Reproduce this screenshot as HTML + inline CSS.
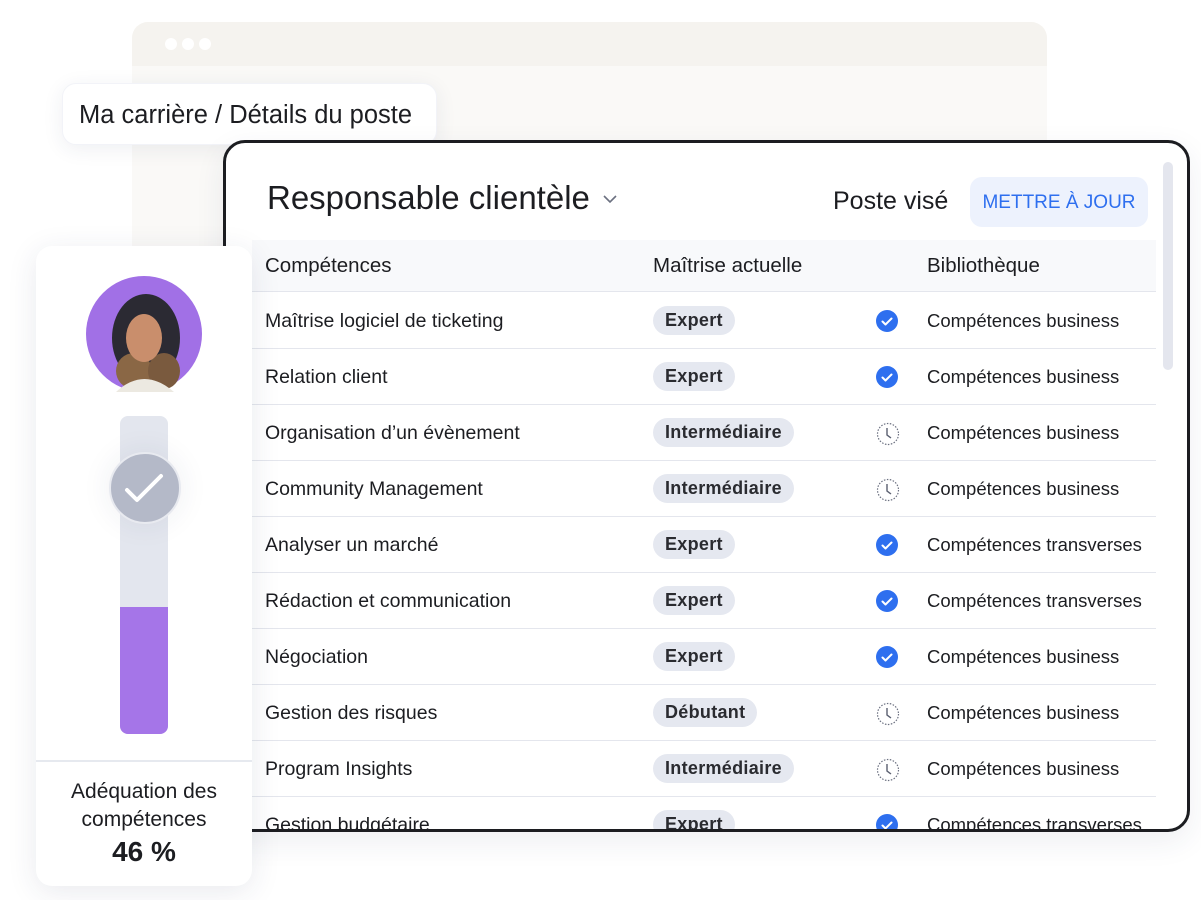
<!DOCTYPE html>
<html><head><meta charset="utf-8"><style>
*{box-sizing:border-box;margin:0;padding:0}
body{width:1201px;height:900px;background:#fff;position:relative;overflow:hidden;font-family:"Liberation Sans","Noto Sans CJK JP",sans-serif;color:#1c1d21}
.abs{position:absolute}
.browser{left:132px;top:22px;width:915px;height:260px;background:#faf9f7;border-radius:16px 16px 0 0;overflow:hidden}
.browser .hd{height:44px;background:#f5f3ef}
.dot{position:absolute;top:16px;width:12px;height:12px;border-radius:50%;background:#fff}
.crumb{left:62px;top:83px;width:375px;height:62px;background:#fff;border-radius:14px;box-shadow:0 4px 20px rgba(40,50,90,.08);font-size:25.5px;line-height:62px;padding-left:16px;border:1px solid #f2f3f8;white-space:nowrap}
.main{left:223px;top:140px;width:967px;height:692px;border:3px solid #1c1d21;border-radius:22px;background:#fff;overflow:hidden;box-shadow:0 10px 30px rgba(40,50,90,.08)}
.title{left:41px;top:36px;font-size:33px}
.poste{left:607px;top:44px;font-size:25px}
.btn{left:744px;top:34px;width:178px;height:50px;background:#edf2fd;border-radius:12px;color:#2e6fef;font-size:19px;text-align:center;line-height:52px}
.thead{left:26px;top:97px;width:904px;height:52px;background:#f8f9fb;border-bottom:1px solid #e4e6ed}
.row{left:26px;width:904px;height:56px;border-bottom:1px solid #e4e6ed;font-size:19.5px}
.cell{position:absolute;top:0;line-height:56px;white-space:nowrap}
.lib{font-size:18.5px}
.badge{position:absolute;left:401px;top:13px;height:29px;line-height:29px;padding:0 12px;background:#e5e8f0;border-radius:15px;font-weight:bold;font-size:18px;color:#2a2b30;letter-spacing:.3px}
.ic{position:absolute;left:624px;top:17px}
.scroll{left:937px;top:19px;width:10px;height:208px;background:#e4e6ee;border-radius:5px}
.card{left:36px;top:246px;width:216px;height:640px;background:#fff;border-radius:16px;box-shadow:0 6px 30px rgba(40,50,90,.10)}
</style></head><body>
<div class="abs browser"><div class="hd"></div><div class="dot" style="left:33px"></div><div class="dot" style="left:50px"></div><div class="dot" style="left:67px"></div></div>
<div class="abs crumb">Ma carrière / Détails du poste</div>
<div class="abs main">
 <div class="abs title">Responsable clientèle</div>
 <svg class="abs" style="left:376px;top:50px" width="16" height="12"><path d="M2 3l6 6 6-6" fill="none" stroke="#6b7080" stroke-width="1.6"/></svg>
 <div class="abs poste">Poste visé</div>
 <div class="abs btn">METTRE À JOUR</div>
 <div class="abs scroll"></div>
 <div class="abs thead" style="font-size:20.5px">
  <div class="cell" style="left:13px;line-height:52px">Compétences</div>
  <div class="cell" style="left:401px;line-height:52px">Maîtrise actuelle</div>
  <div class="cell" style="left:675px;line-height:52px">Bibliothèque</div>
 </div>
 <div id="rows"></div>
</div>
<div class="abs card">
 <svg class="abs" style="left:50px;top:30px" width="116" height="116" viewBox="0 0 116 116">
  <circle cx="58" cy="58" r="58" fill="#a170e6"/>
  <ellipse cx="60" cy="62" rx="34" ry="44" fill="#2b2a33"/>
  <ellipse cx="48" cy="95" rx="18" ry="18" fill="#8a6745"/>
  <ellipse cx="78" cy="95" rx="16" ry="18" fill="#7a5a3e"/>
  <ellipse cx="58" cy="62" rx="18" ry="24" fill="#c98e6c"/>
  <path d="M30 116 Q58 90 88 116Z" fill="#ece9e1"/>
 </svg>
 <div class="abs" style="left:84px;top:170px;width:48px;height:318px;background:#e3e6ee;border-radius:8px;overflow:hidden"><div class="abs" style="left:0;top:191px;width:48px;height:127px;background:#a575e8"></div></div>
 <div class="abs" style="left:73px;top:206px;width:72px;height:72px;border-radius:50%;background:#b4b9c8;border:2px solid #e8eaf0;box-shadow:0 0 30px rgba(40,50,90,.08)"></div>
 <svg class="abs" style="left:73px;top:206px" width="72" height="72"><path d="M18 38l10 10 24-24" fill="none" stroke="#fff" stroke-width="4" stroke-linecap="round" stroke-linejoin="round"/></svg>
 <div class="abs" style="left:0;top:514px;width:216px;height:2px;background:#e6e9ef"></div>
 <div class="abs" style="left:0;top:532px;width:216px;text-align:center;font-size:21px;line-height:28px">Adéquation des<br>compétences</div>
 <div class="abs" style="left:0;top:590px;width:216px;text-align:center;font-size:28px;font-weight:bold">46 %</div>
</div>
<script>
const d=[["Maîtrise logiciel de ticketing","Expert",1,"business"],["Relation client","Expert",1,"business"],["Organisation d’un évènement","Intermédiaire",0,"business"],["Community Management","Intermédiaire",0,"business"],["Analyser un marché","Expert",1,"transverses"],["Rédaction et communication","Expert",1,"transverses"],["Négociation","Expert",1,"business"],["Gestion des risques","Débutant",0,"business"],["Program Insights","Intermédiaire",0,"business"],["Gestion budgétaire","Expert",1,"transverses"]];
const ok='<svg width="22" height="22"><circle cx="11" cy="11" r="11" fill="#2e6fef"/><path d="M6.5 11.5l3 3 6-6" fill="none" stroke="#fff" stroke-width="2" stroke-linecap="round" stroke-linejoin="round"/></svg>';
const cl='<svg width="24" height="24"><circle cx="12" cy="12" r="10.5" fill="none" stroke="#6b7080" stroke-width="1.2" stroke-dasharray="1.5 1.5"/><path d="M11 6v7l4 3" fill="none" stroke="#5a5f70" stroke-width="1.4"/></svg>';
let h='';d.forEach((r,i)=>{h+=`<div class="abs row" style="top:${150+i*56}px"><div class="cell" style="left:13px">${r[0]}</div><div class="badge">${r[1]}</div><div class="ic">${r[2]?ok:cl}</div><div class="cell lib" style="left:675px">Compétences ${r[3]}</div></div>`});
document.getElementById('rows').innerHTML=h;
</script>
</body></html>
